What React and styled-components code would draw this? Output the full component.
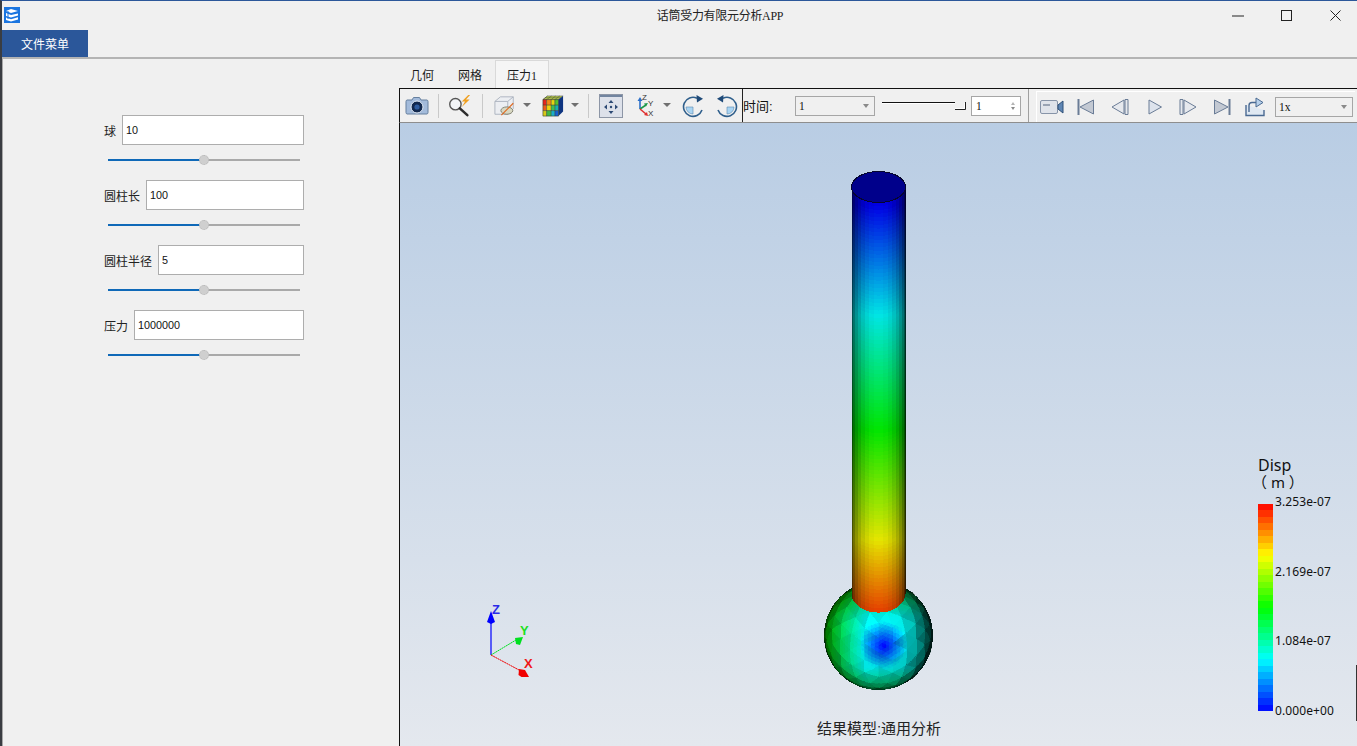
import React from "react";
import styled, { createGlobalStyle } from "styled-components";

const UI_FONT = `"Liberation Sans", "Noto Sans CJK SC", sans-serif`;
const SERIF_FONT = `"Liberation Serif", "Noto Sans CJK SC", serif`;

const GlobalStyle = createGlobalStyle`
  html, body { margin: 0; padding: 0; height: 100%; overflow: hidden; background: #f0f0f0; }
  * { box-sizing: border-box; }
`;

/* ---------- colour map and model geometry ---------- */

const STOPS = [
  [0, 0, 255],
  [0, 255, 255],
  [0, 255, 0],
  [255, 255, 0],
  [255, 0, 0],
];

const rainbow = (v, shade = 1) => {
  const t = Math.min(Math.max(v, 0), 0.9999) * 4;
  const i = Math.floor(t);
  const f = t - i;
  const c = STOPS[i].map((a, k) => Math.round((a + (STOPS[i + 1][k] - a) * f) * shade));
  return `rgb(${c[0]},${c[1]},${c[2]})`;
};

const AXIS_V = [
  [205, 0],
  [315, 0.25],
  [430, 0.5],
  [540, 0.75],
  [615, 0.94],
];

const valueAtY = (y) => {
  if (y <= AXIS_V[0][0]) return 0;
  for (let i = 1; i < AXIS_V.length; i++) {
    if (y <= AXIS_V[i][0]) {
      const [y0, v0] = AXIS_V[i - 1];
      const [y1, v1] = AXIS_V[i];
      return v0 + ((y - y0) / (y1 - y0)) * (v1 - v0);
    }
  }
  return 0.94;
};

const buildCylinder = () => {
  const cx = 878.5;
  const r = 27;
  const strips = 18;
  const rows = 110;
  const quads = [];
  for (let s = 0; s < strips; s++) {
    const a0 = -Math.PI / 2 + (s / strips) * Math.PI;
    const a1 = -Math.PI / 2 + ((s + 1) / strips) * Math.PI;
    const mid = (a0 + a1) / 2;
    const shade = 0.1 + 0.8 * Math.pow(Math.cos(mid), 0.95);
    for (let j = 0; j < rows; j++) {
      const level = (t, a) => {
        const top = 187 + 15.5 * Math.cos(a);
        const bottom = 593 + 19 * Math.cos(a);
        return top + (bottom - top) * t;
      };
      const t0 = j / rows;
      const t1 = (j + 1) / rows;
      const x0 = (cx + r * Math.sin(a0)).toFixed(1);
      const x1 = (cx + r * Math.sin(a1)).toFixed(1);
      const points = `${x0},${level(t0, a0).toFixed(1)} ${x1},${level(t0, a1).toFixed(1)} ${x1},${(level(t1, a1) + 0.6).toFixed(1)} ${x0},${(level(t1, a0) + 0.6).toFixed(1)}`;
      const y = (level(t0, mid) + level(t1, mid)) / 2;
      quads.push({ points, fill: rainbow(valueAtY(y), shade) });
    }
  }
  return quads;
};

const buildSphere = () => {
  const g = (1 + Math.sqrt(5)) / 2;
  const norm = (p) => {
    const l = Math.hypot(p[0], p[1], p[2]);
    return [p[0] / l, p[1] / l, p[2] / l];
  };
  const verts = [
    [-1, g, 0], [1, g, 0], [-1, -g, 0], [1, -g, 0],
    [0, -1, g], [0, 1, g], [0, -1, -g], [0, 1, -g],
    [g, 0, -1], [g, 0, 1], [-g, 0, -1], [-g, 0, 1],
  ].map(norm);
  const mid = (a, b) => norm([a[0] + b[0], a[1] + b[1], a[2] + b[2]]);
  const split = (list) => {
    const next = [];
    list.forEach(([a, b, c]) => {
      const ab = mid(a, b);
      const bc = mid(b, c);
      const ca = mid(c, a);
      next.push([a, ab, ca], [b, bc, ab], [c, ca, bc], [ab, bc, ca]);
    });
    return next;
  };
  let faces = [
    [0, 11, 5], [0, 5, 1], [0, 1, 7], [0, 7, 10], [0, 10, 11],
    [1, 5, 9], [5, 11, 4], [11, 10, 2], [10, 7, 6], [7, 1, 8],
    [3, 9, 4], [3, 4, 2], [3, 2, 6], [3, 6, 8], [3, 8, 9],
    [4, 9, 5], [2, 4, 11], [6, 2, 10], [8, 6, 7], [9, 8, 1],
  ].map((f) => f.map((i) => verts[i]));
  faces = split(split(faces));

  const tilt = 0.32;
  const rot = ([x, y, z]) => [
    x,
    y * Math.cos(tilt) - z * Math.sin(tilt),
    y * Math.sin(tilt) + z * Math.cos(tilt),
  ];
  const centre = (tri) =>
    norm([
      tri[0][0] + tri[1][0] + tri[2][0],
      tri[0][1] + tri[1][1] + tri[2][1],
      tri[0][2] + tri[1][2] + tri[2][2],
    ]);
  const focus = norm([0.1, -0.2, 1]);
  const R = 54;
  const out = [];
  faces.forEach((f, index) => {
    const coarse = f.map(rot);
    const n = centre(coarse);
    if (n[2] < -0.15) return;
    // every coarse facet keeps one shade, the colour runs smoothly across it
    const jitter = 0.92 + 0.14 * ((index * 37) % 11) / 10;
    const shade = Math.min(
      Math.max(
        (0.16 + 0.84 * Math.pow(Math.max(n[2], 0), 0.85) - Math.max(0, n[0] - 0.3) * 0.45) * jitter,
        0.1
      ),
      1
    );
    split(split([coarse])).forEach((tri) => {
      const c = centre(tri);
      if (c[2] <= 0) return;
      const d = Math.hypot(c[0] - focus[0], c[1] - focus[1], c[2] - focus[2]);
      let v = d < 0.46 ? (d / 0.46) * 0.25 : 0.25 + (d - 0.46) * 0.05;
      v += Math.max(0, -c[0] - 0.25) * 0.3 + Math.max(0, c[1] - 0.35) * 0.22 + Math.max(0, -c[1] - 0.6) * 0.25;
      out.push({
        points: tri.map((p) => `${(878.5 + p[0] * R).toFixed(1)},${(635.5 - p[1] * R).toFixed(1)}`).join(" "),
        fill: rainbow(v, shade),
      });
    });
  });
  return out;
};

const CYLINDER = buildCylinder();
const SPHERE = buildSphere();
const BANDS = Array.from({ length: 32 }, (_, i) => rainbow(1 - (i + 0.5) / 32));

/* ---------- window frame ---------- */

const Window = styled.div`
  position: relative;
  width: 1357px;
  height: 746px;
  display: flex;
  flex-direction: column;
  background: #f0f0f0;
  border-top: 1px solid #2b579a;
  border-left: 2px solid #3a3d42;
  font-family: ${UI_FONT};
  color: #1c1c1c;
  overflow: hidden;
`;

const EdgeAccent = styled.div`
  position: absolute;
  left: -2px;
  top: 682px;
  bottom: 0;
  width: 2px;
  background: #0a84e8;
`;

const EdgeMark = styled.div`
  position: absolute;
  right: 0;
  top: 664px;
  height: 56px;
  width: 1px;
  background: #333;
`;

const TitleBar = styled.div`
  height: 29px;
  display: flex;
  align-items: center;
  padding-left: 2px;
  flex: none;
`;

const AppIcon = styled.svg`
  width: 16px;
  height: 16px;
  flex: none;
  margin-top: -1px;
`;

const Title = styled.div`
  flex: 1;
  text-align: center;
  padding-left: 207px;
  font: 12px ${SERIF_FONT};
  letter-spacing: -0.3px;
  color: #222;
  margin-top: -1px;
`;

const Controls = styled.div`
  display: flex;
  flex: none;
  margin-right: -3px;
`;

const ControlButton = styled.div`
  width: 49px;
  height: 29px;
  display: flex;
  align-items: center;
  justify-content: center;
  svg { display: block; }
`;

const MenuBar = styled.div`
  height: 28px;
  flex: none;
  display: flex;
  border-bottom: 1px solid #b4b4b4;
`;

const MenuButton = styled.div`
  width: 86px;
  height: 27px;
  background: #2b579a;
  color: #fff;
  font-size: 12px;
  display: flex;
  align-items: center;
  justify-content: center;
`;

const Body = styled.div`
  flex: 1;
  min-height: 0;
  display: flex;
`;

/* ---------- left form ---------- */

const FormPanel = styled.div`
  width: 397px;
  flex: none;
  border-left: 1px solid #a8a8a8;
  border-top: 1px solid #b4b4b4;
  padding: 56px 0 0 101px;
  display: flex;
  flex-direction: column;
  gap: 5px;
`;

const Field = styled.div`
  width: 200px;
  height: 60px;
  display: flex;
  flex-direction: column;
  gap: 14px;
`;

const FieldRow = styled.div`
  display: flex;
  align-items: center;
  gap: 6px;
  height: 30px;
`;

const FieldLabel = styled.label`
  flex: none;
  font-size: 12px;
  color: #222;
`;

const FieldInput = styled.input`
  flex: 1;
  min-width: 0;
  height: 30px;
  border: 1px solid #adadad;
  background: #fff;
  padding: 0 3px;
  font: 10.8px ${UI_FONT};
  color: #111;
  outline: none;
`;

const Track = styled.div`
  position: relative;
  width: 192px;
  height: 2px;
  margin-left: 4px;
  background: #a9a9a9;
`;

const TrackFill = styled.div`
  height: 100%;
  background: #0f69b8;
`;

const Thumb = styled.div`
  position: absolute;
  top: -4px;
  width: 10px;
  height: 10px;
  margin-left: -5px;
  border-radius: 50%;
  background: #cfcfcf;
  border: 1px dotted #b5b5b5;
`;

/* ---------- right side: tabs and toolbar ---------- */

const ResultPane = styled.div`
  flex: 1;
  min-width: 0;
  display: flex;
  flex-direction: column;
`;

const TabBar = styled.div`
  height: 30px;
  flex: none;
  display: flex;
  align-items: flex-end;
  border-top: 1px solid #b4b4b4;
`;

const Tab = styled.div`
  height: 28px;
  padding: 0 ${(p) => (p.$active ? "11px" : "10px")};
  margin-right: ${(p) => (p.$active ? "0" : "2px")};
  display: flex;
  align-items: center;
  font: 12px ${SERIF_FONT};
  color: #1c1c1c;
  background: ${(p) => (p.$active ? "#f5f5f5" : "transparent")};
  border: 1px solid ${(p) => (p.$active ? "#d9d9d9" : "transparent")};
  border-bottom: none;
`;

const Toolbar = styled.div`
  height: 35px;
  flex: none;
  display: flex;
  align-items: center;
  padding-left: 5px;
  border-top: 1px solid #111;
  border-left: 1px solid #111;
  border-bottom: 1px solid #8e8e8e;
  background: #f0f0f0;
`;

const TransportGroup = styled.div`
  flex: none;
  align-self: flex-end;
  height: 31px;
  margin-left: 7px;
  padding-right: 2px;
  display: flex;
  align-items: center;
  border-top: 1px solid #fff;
  border-left: 1px solid #fff;
`;

const Slot = styled.div`
  flex: none;
  width: ${(p) => p.$w}px;
  height: 24px;
  margin-left: ${(p) => p.$ml || 0}px;
  display: flex;
  align-items: center;
  justify-content: center;
  svg { display: block; }
`;

const Separator = styled.div`
  flex: none;
  width: 1px;
  height: 24px;
  margin-left: ${(p) => p.$ml}px;
  background: #c9c9c9;
`;

const Divider = styled.div`
  flex: none;
  width: 1px;
  height: 33px;
  margin-left: ${(p) => p.$ml}px;
  background: ${(p) => p.$color};
`;

const Caret = styled.div`
  flex: none;
  margin-left: ${(p) => p.$ml || 0}px;
  width: 10px;
  height: 5px;
  display: flex;
  justify-content: center;
  &::after {
    content: "";
    border-left: 4px solid transparent;
    border-right: 4px solid transparent;
    border-top: 4px solid #707070;
  }
`;

const TimeLabel = styled.div`
  flex: none;
  width: 52px;
  font-size: 13px;
  color: #111;
`;

const Combo = styled.div`
  flex: none;
  width: ${(p) => p.$w}px;
  height: 20px;
  margin-left: ${(p) => p.$ml || 0}px;
  padding: 0 5px 0 3px;
  display: flex;
  align-items: center;
  justify-content: space-between;
  border: 1px solid #a6a6a6;
  background: #f0f0f0;
  font: 11.5px ${SERIF_FONT};
  color: #111;
`;

const SmallCaret = styled.div`
  border-left: 3.5px solid transparent;
  border-right: 3.5px solid transparent;
  border-top: 4px solid #8a8a8a;
`;

const SpinBox = styled.div`
  flex: none;
  width: 50px;
  height: 20px;
  margin-left: 5px;
  padding: 0 4px;
  display: flex;
  align-items: center;
  justify-content: space-between;
  border: 1px solid #a6a6a6;
  background: #fff;
  font: 11.5px ${SERIF_FONT};
  color: #111;
`;

const SpinArrows = styled.div`
  display: flex;
  flex-direction: column;
  gap: 2px;
  margin-right: 1px;
`;

const SpinArrow = styled.div`
  border-left: 2.5px solid transparent;
  border-right: 2.5px solid transparent;
  ${(p) => (p.$up ? "border-bottom: 3px solid #b5b5b5;" : "border-top: 3px solid #8a8a8a;")}
`;

/* ---------- 3D view ---------- */

const Viewport = styled.div`
  position: relative;
  flex: 1;
  min-height: 0;
  border-left: 1px solid #111;
  background: linear-gradient(180deg, #b9cde4 0%, #e4e8ee 100%);
  overflow: hidden;
`;

const Scene = styled.svg`
  position: absolute;
  left: 0;
  top: 0;
  width: 957px;
  height: 623px;
`;

const Caption = styled.div`
  position: absolute;
  left: 379px;
  width: 200px;
  top: 596px;
  text-align: center;
  font-size: 15px;
  line-height: 20px;
  color: #222;
`;

const Legend = styled.div`
  position: absolute;
  left: 858px;
  top: 334px;
  display: flex;
  flex-direction: column;
  color: #111;
`;

const LegendTitle = styled.div`
  font: 16px/17px "Noto Sans", "Noto Sans CJK SC", sans-serif;
`;

const LegendUnit = styled.div`
  font: 15px/17px "Noto Sans", "Noto Sans CJK SC", sans-serif;
  margin-left: -6px;
`;

const LegendBody = styled.div`
  display: flex;
  margin-top: 13px;
`;

const LegendBar = styled.div`
  width: 15px;
  height: 207px;
  display: flex;
  flex-direction: column;
`;

const Band = styled.div`
  flex: 1;
`;

const LegendScale = styled.div`
  height: 223px;
  margin: -9px 0 0 2px;
  display: flex;
  flex-direction: column;
  justify-content: space-between;
  font: 12px/14px "Noto Sans", sans-serif;
  letter-spacing: 0.1px;
`;

/* ---------- icons ---------- */

const CameraIcon = () => (
  <svg width="24" height="20" viewBox="0 0 24 20">
    <path d="M2 4h5l1.5-2.5h6L16 4h6a1.5 1.5 0 0 1 1 1.5v11a1.5 1.5 0 0 1-1 1.5H2a1.5 1.5 0 0 1-1-1.5v-11A1.5 1.5 0 0 1 2 4z" fill="#a3bbdb" stroke="#66809f" />
    <circle cx="12" cy="11" r="6" fill="#12294f" stroke="#e3ebf5" />
    <circle cx="12" cy="11" r="2.6" fill="#2f5c9e" />
  </svg>
);

const SearchBoltIcon = () => (
  <svg width="24" height="24" viewBox="0 0 24 24">
    <circle cx="7" cy="10" r="6.2" fill="#f2f5f8" stroke="#555" strokeWidth="1.5" />
    <path d="M11.8 14.6L20 22" stroke="#2d2d2d" strokeWidth="2.8" strokeLinecap="round" />
    <path d="M21 0l-7 7h3.5L14 13l8.5-8h-4L23 0z" fill="#f0a020" />
  </svg>
);

const ClipBoxIcon = () => (
  <svg width="24" height="24" viewBox="0 0 24 24">
    <path d="M1 7l6-5h14v13l-6 6H1z" fill="#eceef2" stroke="#aab1bd" />
    <path d="M1 7h14v14M15 7l6-5" fill="none" stroke="#aab1bd" />
    <ellipse cx="14" cy="17" rx="6.5" ry="4" fill="#d9d8c2" stroke="#7c7c6c" />
    <path d="M8 22L21 9" stroke="#e06a20" strokeWidth="1.3" />
  </svg>
);

const ColorCubeIcon = () => (
  <svg width="24" height="24" viewBox="0 0 24 24">
    <path d="M1 5l5-4h17l-5 4z" fill="#b8c850" stroke="#444" strokeWidth=".5" />
    <path d="M6 1L1 5M10.5 1L5 5M15 1l-5 4M19.5 1L14 5M3.5 3h17" stroke="#3c4c2c" strokeWidth=".5" />
    <rect x="1" y="5" width="4" height="6" fill="#e8241d" />
    <rect x="5" y="5" width="5" height="6" fill="#f28a18" />
    <rect x="10" y="5" width="4" height="6" fill="#e8d410" />
    <rect x="14" y="5" width="4" height="6" fill="#58c030" />
    <rect x="1" y="11" width="4" height="6" fill="#ee5a18" />
    <rect x="5" y="11" width="5" height="6" fill="#e8d410" />
    <rect x="10" y="11" width="4" height="6" fill="#40c050" />
    <rect x="14" y="11" width="4" height="6" fill="#18b0b0" />
    <rect x="1" y="17" width="4" height="6" fill="#d8c818" />
    <rect x="5" y="17" width="5" height="6" fill="#40b848" />
    <rect x="10" y="17" width="4" height="6" fill="#18b0c8" />
    <rect x="14" y="17" width="4" height="6" fill="#1860d0" />
    <path d="M18 5l5-4v17l-5 5z" fill="#0e3480" />
    <path d="M1 11h17M1 17h17M5 5v18M10 5v18M14 5v18M1 5h17v18H1z" fill="none" stroke="#2c3a2c" strokeWidth=".6" />
  </svg>
);

const MoveIcon = () => (
  <svg width="24" height="24" viewBox="0 0 24 24">
    <rect x=".5" y=".5" width="23" height="23" fill="#dde1ea" stroke="#8d96a6" />
    <rect x="1" y="1" width="22" height="2" fill="#71849f" />
    <path d="M12 6l-2.5 3h5zM12 20l-2.5-3h5zM5 13l3-2.5v5zM19 13l-3-2.5v5z" fill="#2d4a75" />
    <circle cx="12" cy="13" r="1.2" fill="#2d4a75" />
  </svg>
);

const AxisLetter = styled.text`
  font: 8px ${UI_FONT};
  fill: #333;
`;

const AxisIcon = () => (
  <svg width="18" height="24" viewBox="0 0 18 24">
    <path d="M4 15V6" stroke="#2b6fc8" strokeWidth="1.6" />
    <path d="M4 3l-2.5 4h5z" fill="#2b6fc8" />
    <path d="M4 15l6-4" stroke="#1f9a4a" strokeWidth="1.6" />
    <path d="M12 9l-4 .5 2 3z" fill="#1f9a4a" />
    <path d="M4 15l6 5" stroke="#e03030" strokeWidth="1.6" />
    <path d="M12 22l-1-4-3 3z" fill="#e03030" />
    <AxisLetter x="6" y="6">Z</AxisLetter>
    <AxisLetter x="12" y="12">Y</AxisLetter>
    <AxisLetter x="12" y="22">X</AxisLetter>
  </svg>
);

const RotateIcon = () => (
  <svg width="22" height="24" viewBox="0 0 22 24">
    <path d="M11 13H4a7 7 0 0 0 7 7z" fill="#a9d4f2" stroke="#5a8ab4" strokeWidth=".6" />
    <path d="M20 16A9.5 9.5 0 1 1 15 4.2" fill="none" stroke="#2f5f8c" strokeWidth="1.6" />
    <path d="M14.5 1l6.5 3.8-6 3.7z" fill="#1f4a78" />
  </svg>
);

const RotateBackIcon = () => (
  <svg width="22" height="24" viewBox="0 0 22 24">
    <path d="M11 13h7a7 7 0 0 1-7 7z" fill="#a9d4f2" stroke="#5a8ab4" strokeWidth=".6" />
    <path d="M2 16A9.5 9.5 0 1 0 7 4.2" fill="none" stroke="#2f5f8c" strokeWidth="1.6" />
    <path d="M7.5 1L1 4.8l6 3.7z" fill="#1f4a78" />
  </svg>
);

const TimeSlider = () => (
  <svg width="85" height="16" viewBox="0 0 85 16">
    <path d="M1 4.5h73" stroke="#111" />
    <path d="M1 5.5h73" stroke="#fff" />
    <path d="M74 11.5h10.5V4" fill="none" stroke="#222" />
    <path d="M74 10.5h9.5V5" fill="none" stroke="#fff" />
  </svg>
);

const VideoIcon = () => (
  <svg width="24" height="16" viewBox="0 0 24 16">
    <rect x=".5" y="1.5" width="17" height="13" rx="1.5" fill="#dfe3ea" stroke="#8794a8" />
    <rect x="3" y="5" width="7" height="2" fill="#99a3b3" />
    <path d="M18 6l5-4v12l-5-4z" fill="#5f86b4" stroke="#2f5078" />
  </svg>
);

const STROKE = "#6a7c96";

const FirstIcon = () => (
  <svg width="18" height="18" viewBox="0 0 18 18">
    <path d="M1.5 1v16" stroke={STROKE} strokeWidth="2" />
    <path d="M16.5 2L3 9l13.5 7z" fill="#c3c9d3" stroke={STROKE} />
  </svg>
);

const PrevIcon = () => (
  <svg width="18" height="18" viewBox="0 0 18 18">
    <path d="M13 2L1 9l12 7z" fill="#e6e9ee" stroke={STROKE} />
    <path d="M14 1.5h3v15h-3z" fill="#e6e9ee" stroke={STROKE} />
  </svg>
);

const PlayIcon = () => (
  <svg width="16" height="18" viewBox="0 0 16 18">
    <path d="M2 2l12.5 7L2 16z" fill="#dde3ec" stroke={STROKE} />
  </svg>
);

const NextIcon = () => (
  <svg width="18" height="18" viewBox="0 0 18 18">
    <path d="M1 1.5h3v15H1z" fill="#e6e9ee" stroke={STROKE} />
    <path d="M5 2l12 7-12 7z" fill="#e6e9ee" stroke={STROKE} />
  </svg>
);

const LastIcon = () => (
  <svg width="18" height="18" viewBox="0 0 18 18">
    <path d="M16.5 1v16" stroke={STROKE} strokeWidth="2" />
    <path d="M1.5 2L15 9 1.5 16z" fill="#c3c9d3" stroke={STROKE} />
  </svg>
);

const ExportIcon = () => (
  <svg width="22" height="20" viewBox="0 0 22 20">
    <path d="M2 8v10.5h18V13" fill="#dfe8f2" stroke="#4a6a92" strokeWidth="1.4" />
    <path d="M5 15V8.5A3 3 0 0 1 8 5.5h5" fill="none" stroke="#4a6a92" strokeWidth="1.4" />
    <path d="M12 1l7 4.5-7 4.5z" fill="#b7d0ea" stroke="#4a6a92" />
  </svg>
);

/* ---------- parts ---------- */

const FIELDS = [
  { label: "球", value: "10" },
  { label: "圆柱长", value: "100" },
  { label: "圆柱半径", value: "5" },
  { label: "压力", value: "1000000" },
];

const ParamField = ({ label, value }) => (
  <Field>
    <FieldRow>
      <FieldLabel>{label}</FieldLabel>
      <FieldInput readOnly value={value} />
    </FieldRow>
    <Track>
      <TrackFill style={{ width: "50%" }} />
      <Thumb style={{ left: "50%" }} />
    </Track>
  </Field>
);

const TriadLabel = styled.text`
  font: bold 13px ${UI_FONT};
`;

const ModelScene = () => (
  <Scene viewBox="400 123 957 623">
    <g shapeRendering="crispEdges">
      <circle cx="878.5" cy="635.5" r="54.5" fill="#07302c" />
      {SPHERE.map((t, i) => (
        <polygon key={i} points={t.points} fill={t.fill} stroke={t.fill} strokeWidth=".4" />
      ))}
      {CYLINDER.map((q, i) => (
        <polygon key={i} points={q.points} fill={q.fill} />
      ))}
      <ellipse cx="878.5" cy="187" rx="27" ry="15.5" fill="#00008b" stroke="#06062e" />
    </g>
    <g>
      <path d="M491 655V622" stroke="#0000ff" strokeWidth="1.2" />
      <path d="M491 611l-4 11h8zM487 622h8l-4 2z" fill="#0000ff" />
      <path d="M491 655l25-15" stroke="#00e020" strokeWidth="1" strokeDasharray="2 .5" />
      <path d="M523 637l-8 1 1 6 4 1z" fill="#00e020" />
      <path d="M491 655l28 15" stroke="#f00000" strokeWidth="1" strokeDasharray="2 .5" />
      <path d="M529 677l-4-7-6-1-.5 6 3 2z" fill="#f00000" />
    </g>
    <TriadLabel x="492" y="614" fill="#2a2ae8">Z</TriadLabel>
    <TriadLabel x="520" y="635" fill="#1ee01e">Y</TriadLabel>
    <TriadLabel x="524" y="668" fill="#f01818">X</TriadLabel>
  </Scene>
);

export default function App() {
  return (
    <Window>
      <GlobalStyle />
      <TitleBar>
        <AppIcon viewBox="0 0 16 16">
          <rect width="16" height="16" fill="#1a75e0" />
          <path d="M2 4l5-2 7 2-7 2zM2 6v3l5 1.5 7-2V6.5l-7 1.5zM2 10.5V13l5 1.5 7-2v-2.2l-7 2z" fill="#fff" />
          <path d="M4 4v8" stroke="#1a75e0" />
        </AppIcon>
        <Title>话筒受力有限元分析APP</Title>
        <Controls>
          <ControlButton>
            <svg width="12" height="2" viewBox="0 0 12 2"><path d="M0 1h12" stroke="#222" /></svg>
          </ControlButton>
          <ControlButton>
            <svg width="11" height="11" viewBox="0 0 11 11"><rect x=".5" y=".5" width="10" height="10" fill="none" stroke="#222" /></svg>
          </ControlButton>
          <ControlButton>
            <svg width="11" height="11" viewBox="0 0 11 11"><path d="M.5.5l10 10M10.5.5l-10 10" stroke="#222" /></svg>
          </ControlButton>
        </Controls>
      </TitleBar>
      <MenuBar>
        <MenuButton>文件菜单</MenuButton>
      </MenuBar>
      <Body>
        <FormPanel>
          {FIELDS.map((f) => (
            <ParamField key={f.label} {...f} />
          ))}
        </FormPanel>
        <ResultPane>
          <TabBar>
            <Tab>几何</Tab>
            <Tab>网格</Tab>
            <Tab $active>压力1</Tab>
          </TabBar>
          <Toolbar>
            <Slot $w={24}><CameraIcon /></Slot>
            <Separator $ml={9} />
            <Slot $w={22} $ml={10}><SearchBoltIcon /></Slot>
            <Separator $ml={11} />
            <Slot $w={22} $ml={11}><ClipBoxIcon /></Slot>
            <Caret $ml={6} />
            <Slot $w={22} $ml={10}><ColorCubeIcon /></Slot>
            <Caret $ml={6} />
            <Separator $ml={8} />
            <Slot $w={24} $ml={10}><MoveIcon /></Slot>
            <Slot $w={18} $ml={13}><AxisIcon /></Slot>
            <Caret $ml={8} />
            <Slot $w={22} $ml={10}><RotateIcon /></Slot>
            <Slot $w={22} $ml={12}><RotateBackIcon /></Slot>
            <Divider $ml={4} $color="#222" />
            <TimeLabel>时间:</TimeLabel>
            <Combo $w={80}>1<SmallCaret /></Combo>
            <Slot $w={85} $ml={6}><TimeSlider /></Slot>
            <SpinBox>
              1
              <SpinArrows>
                <SpinArrow $up />
                <SpinArrow />
              </SpinArrows>
            </SpinBox>
            <Divider $ml={7} $color="#a0a0a0" />
            <TransportGroup>
              <Slot $w={24} $ml={3}><VideoIcon /></Slot>
              <Slot $w={18} $ml={13}><FirstIcon /></Slot>
              <Slot $w={18} $ml={16}><PrevIcon /></Slot>
              <Slot $w={16} $ml={18}><PlayIcon /></Slot>
              <Slot $w={18} $ml={16}><NextIcon /></Slot>
              <Slot $w={18} $ml={16}><LastIcon /></Slot>
              <Slot $w={22} $ml={13}><ExportIcon /></Slot>
              <Combo $w={78} $ml={9}>1x<SmallCaret /></Combo>
            </TransportGroup>
          </Toolbar>
          <Viewport>
            <ModelScene />
            <Caption>结果模型:通用分析</Caption>
            <Legend>
              <LegendTitle>Disp</LegendTitle>
              <LegendUnit>（ m ）</LegendUnit>
              <LegendBody>
                <LegendBar>
                  {BANDS.map((c) => (
                    <Band key={c} style={{ background: c }} />
                  ))}
                </LegendBar>
                <LegendScale>
                  <span>3.253e-07</span>
                  <span>2.169e-07</span>
                  <span>1.084e-07</span>
                  <span>0.000e+00</span>
                </LegendScale>
              </LegendBody>
            </Legend>
          </Viewport>
        </ResultPane>
      </Body>
      <EdgeAccent />
      <EdgeMark />
    </Window>
  );
}
